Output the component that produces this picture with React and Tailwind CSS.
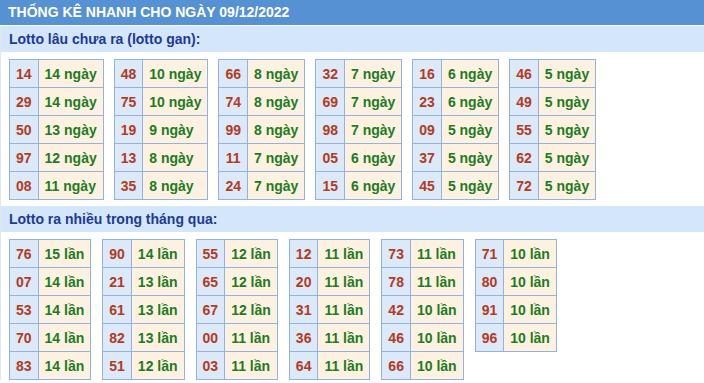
const ganData = [
  [["14", "14 ngày"], ["29", "14 ngày"], ["50", "13 ngày"], ["97", "12 ngày"], ["08", "11 ngày"]],
  [["48", "10 ngày"], ["75", "10 ngày"], ["19", "9 ngày"], ["13", "8 ngày"], ["35", "8 ngày"]],
  [["66", "8 ngày"], ["74", "8 ngày"], ["99", "8 ngày"], ["11", "7 ngày"], ["24", "7 ngày"]],
  [["32", "7 ngày"], ["69", "7 ngày"], ["98", "7 ngày"], ["05", "6 ngày"], ["15", "6 ngày"]],
  [["16", "6 ngày"], ["23", "6 ngày"], ["09", "5 ngày"], ["37", "5 ngày"], ["45", "5 ngày"]],
  [["46", "5 ngày"], ["49", "5 ngày"], ["55", "5 ngày"], ["62", "5 ngày"], ["72", "5 ngày"]],
];

const nhieuData = [
  [["76", "15 lần"], ["07", "14 lần"], ["53", "14 lần"], ["70", "14 lần"], ["83", "14 lần"]],
  [["90", "14 lần"], ["21", "13 lần"], ["61", "13 lần"], ["82", "13 lần"], ["51", "12 lần"]],
  [["55", "12 lần"], ["65", "12 lần"], ["67", "12 lần"], ["00", "11 lần"], ["03", "11 lần"]],
  [["12", "11 lần"], ["20", "11 lần"], ["31", "11 lần"], ["36", "11 lần"], ["64", "11 lần"]],
  [["73", "11 lần"], ["78", "11 lần"], ["42", "10 lần"], ["46", "10 lần"], ["66", "10 lần"]],
  [["71", "10 lần"], ["80", "10 lần"], ["91", "10 lần"], ["96", "10 lần"]],
];

const StatTable = ({ rows }) => (
  <table className="border-collapse text-[14px] font-bold leading-none">
    <tbody>
      {rows.map(([num, val]) => (
        <tr key={num} className="h-[28px]">
          <td className="border border-[#94b2de] bg-[#dce9f9] px-[6px] text-center text-[#b33b1e]">{num}</td>
          <td className="border border-[#94b2de] bg-[#fdf2e1] px-[6px] text-[#1e7b23]">{val}</td>
        </tr>
      ))}
    </tbody>
  </table>
);

const SubTitle = ({ children }) => (
  <div className="flex h-[26px] items-center bg-[#d4e6f9] px-2 text-[14px] font-bold text-[#1c3a96]">
    {children}
  </div>
);

export default function App() {
  return (
    <div className="w-[704px] h-[383px] overflow-hidden bg-white" style={{ fontFamily: '"Liberation Sans", Arial, sans-serif' }}>
      <div className="flex h-[25px] items-center bg-[#5692d3] px-2 text-[14px] font-bold text-white">
        THỐNG KÊ NHANH CHO NGÀY 09/12/2022
      </div>
      <div className="mt-[1px] border-l border-[#dfe7f1]">
        <SubTitle>Lotto lâu chưa ra (lotto gan):</SubTitle>
        <div className="mt-[7px] flex items-start gap-[10px] px-2">
          {ganData.map((rows, i) => (
            <StatTable key={i} rows={rows} />
          ))}
        </div>
        <div className="mt-[6px]">
          <SubTitle>Lotto ra nhiều trong tháng qua:</SubTitle>
        </div>
        <div className="mt-[7px] flex items-start gap-[11px] px-2">
          {nhieuData.map((rows, i) => (
            <StatTable key={i} rows={rows} />
          ))}
        </div>
      </div>
    </div>
  );
}
